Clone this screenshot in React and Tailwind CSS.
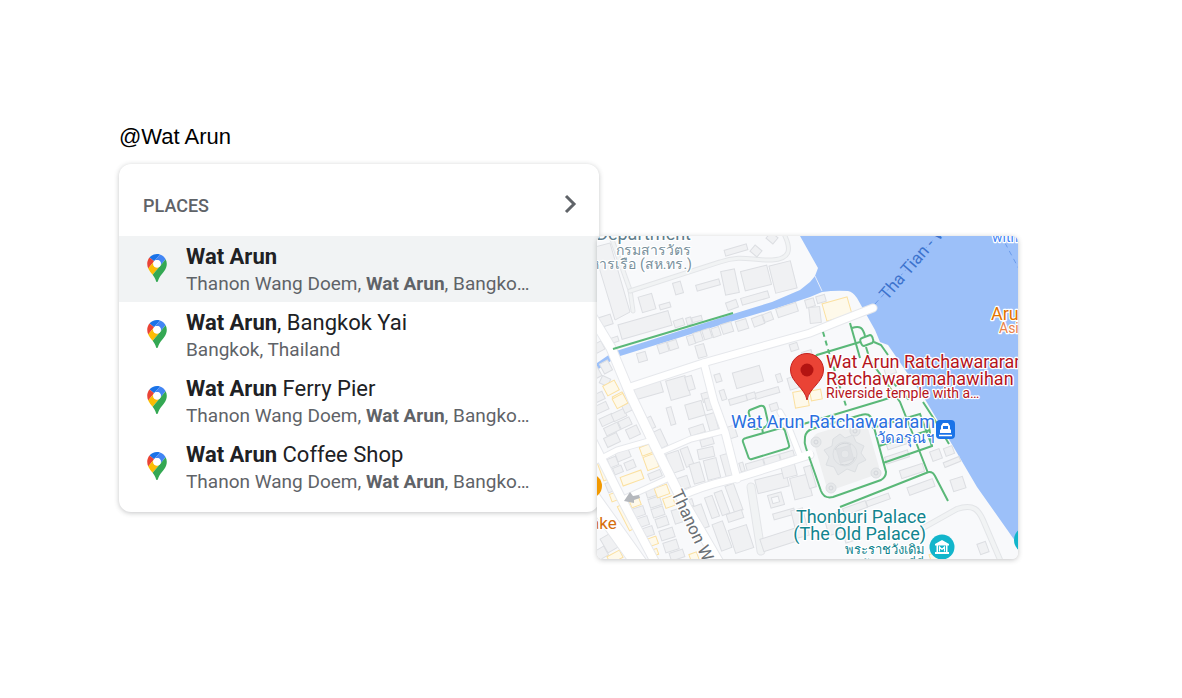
import React, { useState } from 'react';

const places = [
  { id: 'wat-arun', match: 'Wat Arun', rest: '', address: ['Thanon Wang Doem, ', 'Wat Arun', ', Bangko…'] },
  { id: 'bangkok-yai', match: 'Wat Arun', rest: ', Bangkok Yai', address: ['Bangkok, Thailand'] },
  { id: 'ferry-pier', match: 'Wat Arun', rest: ' Ferry Pier', address: ['Thanon Wang Doem, ', 'Wat Arun', ', Bangko…'] },
  { id: 'coffee-shop', match: 'Wat Arun', rest: ' Coffee Shop', address: ['Thanon Wang Doem, ', 'Wat Arun', ', Bangko…'] },
];

// Buildings: [center x, center y, width, height, angle]
const buildings = [
  [50, 67, 14, 16, -16], [68, 70, 11, 5, -16], [48, 89, 52, 15, -16], [81, 52, 8, 12, -16],
  [111, 49, 24, 6, -16], [139, 14, 23, 6, -16], [159, 15, 9, 8, 40], [175, 2, 9, 8, 40], [133, 46, 14, 24, -12],
  [159, 42, 27, 20, -14], [186, 41, 22, 28, -14], [158, 62, 28, 7, -16], [135, 69, 11, 8, -20],
  [8, 85, 14, 10, -18], [17, 104, 9, 5, -18], [82, 87, 10, 7, -18], [92, 85, 5, 7, -16],
  [100, 83, 10, 5, -14], [66, 112, 10, 9, -18], [76, 109, 9, 9, -18], [45, 121, 9, 9, -16],
  [94, 104, 7, 9, -18], [101, 101, 8, 10, -18], [110, 98, 8, 10, -18], [119, 96, 8, 9, -18],
  [130, 92, 11, 10, -18], [145, 89, 11, 10, -18], [161, 85, 11, 9, -20], [171, 81, 9, 8, -20],
  [190, 74, 21, 9, -18], [104, 115, 9, 13, -16], [197, 111, 8, 7, -18], [151, 141, 28, 16, -16],
  [121, 142, 6, 8, -18], [182, 142, 5, 8, -18], [170, 157, 25, 6, -16], [126, 159, 5, 10, -18],
  [196, 147, 9, 12, -16], [51, 153, 28, 14, -16], [81, 152, 20, 20, -16], [93, 147, 7, 14, -16],
  [109, 161, 8, 9, -16], [2, 111, 9, 9, -28], [9, 131, 9, 11, -28], [-1, 137, 8, 10, -28],
  [8, 145, 9, 8, 25], [2, 161, 10, 8, -25], [4, 172, 14, 8, -25], [10, 184, 14, 8, -25], [22, 179, 14, 8, -25],
  [30, 172, 8, 8, -25], [15, 193, 15, 8, -25], [15, 204, 14, 10, -25], [28, 187, 12, 8, -25],
  [36, 196, 12, 10, -25], [53, 187, 7, 12, -25], [63, 203, 9, 18, -25], [74, 180, 5, 18, -16],
  [98, 174, 17, 15, -16], [112, 168, 7, 12, -16], [100, 194, 15, 8, -18], [115, 186, 9, 17, -16],
  [135, 196, 8, 12, -18], [141, 164, 18, 6, -16], [154, 160, 9, 6, -16], [177, 171, 8, 7, -18],
  [16, 226, 9, 9, -22], [26, 219, 14, 9, -22], [21, 234, 9, 7, -22], [33, 229, 10, 8, -22],
  [13, 251, 7, 10, -22], [58, 239, 13, 7, -22], [78, 226, 13, 20, -18], [90, 221, 8, 19, -20],
  [100, 237, 11, 20, -16], [110, 206, 13, 7, -16], [109, 217, 16, 10, -12], [115, 233, 13, 20, -14],
  [130, 229, 8, 22, -16], [86, 247, 12, 12, -18], [41, 276, 13, 9, -18], [45, 286, 13, 9, -18],
  [50, 296, 13, 9, -18], [55, 256, 12, 9, -18], [58, 266, 12, 9, -18], [61, 276, 12, 9, -18],
  [65, 286, 12, 9, -18], [70, 298, 14, 10, -18], [74, 310, 14, 10, -18], [80, 319, 14, 8, -18],
  [81, 280, 10, 14, -18], [93, 267, 6, 7, -18], [103, 281, 11, 24, -20], [115, 271, 8, 22, -20],
  [125, 267, 8, 24, -20], [137, 262, 9, 28, -20], [138, 280, 16, 8, -18], [125, 300, 11, 28, -20],
  [144, 303, 19, 24, -18], [145, 231, 4, 9, -16], [158, 229, 18, 7, -16], [175, 224, 16, 7, -16],
  [190, 219, 14, 6, -16], [175, 247, 32, 14, -14], [192, 235, 14, 12, -14], [204, 251, 18, 22, -14],
  [179, 264, 14, 13, -16], [187, 278, 22, 6, -16], [182, 304, 36, 13, -18], [203, 287, 12, 28, -14],
  [315, 235, 24, 8, -18], [324, 251, 27, 8, -20], [281, 264, 24, 6, -20], [258, 272, 24, 7, -20],
  [300, 221, 24, 7, -18], [299, 206, 20, 10, -18], [339, 219, 10, 10, -20], [352, 215, 9, 8, -20],
  [355, 226, 17, 5, -22], [361, 248, 13, 12, -18], [386, 312, 9, 11, -20], [213, 241, 7, 22, -16],
  [236, 288, 14, 20, -16], [213, 67, 9, 8, -16], [224, 63, 9, 7, -16], [218, 79, 11, 16, -6],
  [210, 118, 10, 6, -16], [293, 134, 11, 9, -18], [255, 300, 16, 10, -18], [14, 306, 16, 16, -30], [3, 318, 14, 10, -30],
];

const shops = [
  [240, 73, 26, 18, -16], [14, 152, 13, 11, -28], [22, 162, 11, 8, -28], [23, 165, 12, 11, -28],
  [49, 214, 11, 9, -20], [54, 226, 12, 14, -20], [35, 242, 22, 9, -20], [6, 234, 6, 21, -20],
  [17, 261, 7, 8, -20], [65, 255, 13, 10, -20], [72, 266, 10, 10, -20], [38, 266, 10, 9, -20],
  [30, 281, 8, 27, -27], [54, 306, 13, 8, -20], [56, 317, 10, 6, -20], [18, 321, 14, 8, -28],
  [97, 321, 8, 8, -20], [-1, 214, 6, 10, -20], [219, 159, 11, 10, -10], [204, 163, 14, 16, -10], [338, 321, 10, 8, -18],
];

const roads = [
  ['M-4 82 L14 112 L34 160 L58 210 L82 258 L124 330', 9],
  ['M30 152 L106 127 L213 97 L240 86 L276 72', 7],
  ['M107 127 L117 166 L128 196 L140 243', 7],
  ['M84 260 C110 248 125 246 140 242 L213 219', 7],
  ['M-3 226 L20 214 L55 204', 5],
  ['M64 216 L94 203 L126 195', 5],
  ['M-4 206 L24 262 L58 326', 8],
  ['M-6 260 L44 330', 15],
  ['M26 263 L70 243', 5],
  ['M183 176 L192 192 L203 220', 5],
];

const sideRoads = [
  ['M13 -2 L33 54 L36 75', 4],
  ['M33 55 L123 26 C145 18 155 25 175 24 C193 23 195 14 187 -2', 4],
  ['M326 292 L360 273 C377 267 382 275 386 284 L404 326', 5],
  ['M154 251 L164 315', 8],
];

const paths = [
  'M16 113 L136 77',
  'M253 87 L263 122',
  'M255 92 C263 89 266 92 268 100',
  'M265 102 L273 99 Q275 99 276 103 Q277 106 275 107 L267 110 Q265 110 264 107 Q262 103 265 102 Z',
  'M277 106 L284 109 L291 119',
  'M263 106 L220 119 L214 125',
  'M269 111 L273 124 L303 166 L315 196 L331 237',
  'M203 189 L286 164 L298 160',
  'M243 271 L329 237 Q335 234 338 240 L351 265',
  'M286 227 L335 210 L331 185',
  'M275 192 L323 178 L335 210',
  'M282 210 L333 194',
  'M326 166 L339 186 L352 208',
  'M208 201 Q209 195 215 193 L264 179 Q273 176 275 184 L289 236 Q289 241 284 244 L236 261 Q227 263 224 255 L209 212 Q207 207 208 201 Z',
  'M146 206 Q145 203 149 202 L184 192 Q187 192 188 195 L192 209 Q193 212 188 213 L155 223 Q152 224 151 220 Z',
  'M153 174 L163 170 Q167 169 168 173 L171 186 Q171 190 166 192 L158 193 Q156 193 155 188 L152 178 Q151 175 153 174 Z',
  'M165 192 L166 197',
];

const PlaceIcon = () => (
  <svg viewBox="0 0 92.3 132.3" className="h-7 w-5 shrink-0" aria-hidden="true">
    <path fill="#1a73e8" d="M60.2 2.2C55.8.8 51 0 46.1 0 32 0 19.3 6.4 10.8 16.5l21.8 18.3L60.2 2.2z" />
    <path fill="#ea4335" d="M10.8 16.5C4.1 24.5 0 34.9 0 46.1c0 8.7 1.7 15.7 4.6 22l28-33.3-21.8-18.3z" />
    <path fill="#4285f4" d="M46.2 28.5c9.8 0 17.7 7.9 17.7 17.7 0 4.3-1.6 8.3-4.2 11.4 0 0 13.9-16.6 27.5-32.7-5.6-10.8-15.3-19-27-22.7L32.6 34.8c3.3-3.8 8.1-6.3 13.6-6.3" />
    <path fill="#fbbc04" d="M46.2 63.8c-9.8 0-17.7-7.9-17.7-17.7 0-4.3 1.5-8.3 4.1-11.3l-28 33.3c4.8 10.6 12.8 19.2 21 29.9l34.1-40.5c-3.3 3.9-8.1 6.3-13.5 6.3" />
    <path fill="#34a853" d="M59.1 109.2c15.4-24.1 33.3-35 33.3-63 0-7.7-1.9-14.9-5.2-21.3L25.6 98c2.6 3.4 5.3 7.3 7.9 11.3 9.4 14.5 6.8 23.1 12.8 23.1s3.4-8.7 12.8-23.2" />
    <circle cx="46.2" cy="46.2" r="18" fill="#fff" />
  </svg>
);

const Block = ({ shape, fill, stroke }) => {
  const [x, y, w, h, angle] = shape;
  return (
    <rect
      x={x - w / 2}
      y={y - h / 2}
      width={w}
      height={h}
      transform={`rotate(${angle} ${x} ${y})`}
      fill={fill}
      stroke={stroke}
    />
  );
};

// Map text with a white halo
const Label = ({ x, y, size, color, anchor = 'start', rotate = 0, halo = '#fff', children }) => (
  <text
    x={x}
    y={y}
    fontSize={size}
    fill={color}
    stroke={halo}
    strokeWidth="2.5"
    strokeLinejoin="round"
    paintOrder="stroke"
    textAnchor={anchor}
    transform={`rotate(${rotate} ${x} ${y})`}
  >
    {children}
  </text>
);

const Temple = () => (
  <g>
    <path d="M216 204 Q216 199 221 197 L262 185 Q269 184 270 189 L282 231 Q283 237 278 239 L238 253 Q231 255 229 249 Z" fill="#eeeff0" />
    <g fill="#e6e8ea" stroke="#dcdfe2">
      <path d="M243 198 L248 202 L256 199 L259 206 L267 210 L264 217 L269 224 L261 228 L258 236 L250 233 L241 239 L237 231 L229 229 L232 221 L227 214 L235 210 L236 203 Z" />
      <circle cx="248" cy="218" r="12" />
      <rect x="241" y="211" width="14" height="14" transform="rotate(-16 248 218)" fill="#dfe1e4" />
      <circle cx="248" cy="218" r="4" />
      <circle cx="219" cy="206" r="5" />
      <circle cx="258" cy="195" r="5" />
      <circle cx="279" cy="237" r="5" />
      <circle cx="234" cy="252" r="5" />
    </g>
    <g fill="none" stroke="#d3d6da">
      <circle cx="219" cy="206" r="2" />
      <circle cx="258" cy="195" r="2" />
      <circle cx="279" cy="237" r="2" />
      <circle cx="234" cy="252" r="2" />
      <path d="M238 214 A11 11 0 0 1 254 209" />
      <path d="M258 221 A11 11 0 0 1 243 228" />
    </g>
  </g>
);

const MapPreview = () => (
  <svg
    viewBox="0 0 421 323"
    className="block h-auto w-full font-[Roboto,'Noto_Sans',sans-serif]"
    role="img"
    aria-label="Map of Wat Arun"
  >
    <rect width="421" height="323" fill="#f8f9fb" />

    {/* River and canal */}
    <path
      fill="#9cc0f9"
      d="M203 0 L221 32 L218 40 L213 46 L203 54 L175 66 L136 78 L16 116 L0 127 V134 L20 121 L136 85 L180 72 L213 61 L225 56 Q238 54 251 55 Q256 56 260 62 L278 94 L283 106 L291 109 L313 141 L326 160 L353 205 L380 251 L416 302 L421 309 V0 Z"
    />
    <path d="M218 40 L225 55" stroke="#e8eefa" fill="none" />

    {sideRoads.map(([d, w]) => (
      <g key={d} fill="none" strokeLinecap="round">
        <path d={d} stroke="#e3e5e8" strokeWidth={w + 1} />
        <path d={d} stroke="#f1f3f4" strokeWidth={w - 1} />
      </g>
    ))}

    <path d="M-2 11 L13 7 L33 76 L18 84 L-2 18 Z" fill="#f1f2f4" stroke="#dddfe3" />
    {buildings.map((shape, i) => (
      <Block key={i} shape={shape} fill="#f0f1f3" stroke="#dcdee2" />
    ))}
    {shops.map((shape, i) => (
      <Block key={i} shape={shape} fill="#fef9ea" stroke="#fbe0a0" />
    ))}
    <rect x="175" y="261" width="7" height="6" transform="rotate(-16 178 264)" fill="#f8f9fb" stroke="#dcdee2" />

    {roads.map(([d, w]) => (
      <path key={d} d={d} fill="none" stroke="#e6e8ec" strokeWidth={w + 2} strokeLinecap="round" />
    ))}
    {roads.map(([d, w]) => (
      <path key={d} d={d} fill="none" stroke="#fff" strokeWidth={w} strokeLinecap="round" />
    ))}

    <Temple />

    <g fill="none" stroke="#5ab878" strokeWidth="2">
      {paths.map((d) => (
        <path key={d} d={d} />
      ))}
      <path d="M226 96 L233 120 L250 173" strokeDasharray="5 4" />
      <path d="M290 140 L313 165" strokeDasharray="5 4" />
    </g>
    <path d="M205 220 L213 217" stroke="#fff" strokeWidth="6" strokeLinecap="round" />

    <path d="M278 68 L345 -6" stroke="#6b9bea" strokeDasharray="5 4" />
    <path d="M408 7 L422 33" stroke="#6b9bea" strokeDasharray="5 4" />
    <path d="M27 265 L33 256 L36 260 L42 259 L43 262 L37 264 L37 267 Z" fill="#b5b8bd" />

    {/* Markers at the map edges */}
    <circle cx="-7" cy="250" r="12" fill="#f29900" />
    <circle cx="430" cy="304" r="13" fill="#12b5cb" />

    <Label x={94} y={4} size={18} color="#607d8b" anchor="end">Department</Label>
    <Label x={94} y={19} size={14} color="#78909c" anchor="end">กรมสารวัตร</Label>
    <Label x={95} y={33} size={14} color="#78909c" anchor="end">หารเรือ (สห.ทร.)</Label>
    <Label x={290} y={65} size={17} color="#3d73cd" rotate={-49} halo="#9cc0f9">Tha Tian - Wat</Label>
    <Label x={395} y={6} size={14} color="#4285f4">with</Label>
    <Label x={394} y={84} size={18} color="#e37400">Aru</Label>
    <Label x={402} y={97} size={14} color="#e8824a">Asi</Label>
    <Label x={-7} y={293} size={17} color="#d56e0c">ake</Label>
    <Label x={74} y={257} size={17} color="#6b7075" rotate={65}>Thanon Wa</Label>
    <Label x={338} y={192} size={18} color="#2a6fe0" anchor="end">Wat Arun Ratchawararam</Label>
    <Label x={337} y={207} size={15} color="#2a6fe0" anchor="end">วัดอรุณฯ</Label>
    <Label x={329} y={287} size={18} color="#12858f" anchor="end">Thonburi Palace</Label>
    <Label x={329} y={304} size={18} color="#12858f" anchor="end">(The Old Palace)</Label>
    <Label x={328} y={318} size={13} color="#12858f" anchor="end">พระราชวังเดิม</Label>
    <Label x={328} y={333} size={13} color="#12858f" anchor="end">วัดอรุณ ที่นี่</Label>

    {/* Ferry stop */}
    <rect x="339" y="184" width="19" height="19" rx="4" fill="#1a73e8" />
    <path d="M346 187 H351 L353 190 V193 L354 194 V197 H343 V194 L344 193 V190 Z M346 190 V193 H351 V190 Z" fill="#fff" fillRule="evenodd" />
    <path d="M342 199.5 H355" stroke="#fff" strokeWidth="1.5" />

    {/* Museum */}
    <circle cx="345" cy="311" r="12.5" fill="#12b5cb" />
    <path d="M345 304 L352 308 V309.500 H338 V308 Z M338 316 H352 V318 H338 Z M339.500 309 H341 V316 H339.500 Z M349 309 H350.500 V316 H349 Z" fill="#fff" />
    <path d="M342.500 315.500 V311 L345 313.500 L347.500 311 V315.500" fill="none" stroke="#fff" strokeWidth="1.200" />

    <Label x={229} y={132} size={18} color="#b5141c">Wat Arun Ratchawararam</Label>
    <Label x={229} y={149} size={18} color="#b5141c">Ratchawaramahawihan</Label>
    <Label x={229} y={162} size={14} color="#b5141c">Riverside temple with a…</Label>

    {/* Selected place */}
    <path d="M210 164 C208 152 193.500 146 193.500 134 A16.500 16.500 0 0 1 226.500 134 C226.500 146 212 152 210 164 Z" fill="#ea4335" stroke="#c5221f" />
    <circle cx="210" cy="134" r="6.500" fill="#b31412" />
  </svg>
);

const PlaceRow = ({ place, active, onSelect }) => (
  <li>
    <button
      type="button"
      onClick={onSelect}
      className={`flex h-[66px] w-full items-center pr-10 pb-0.5 pl-7 text-left ${active ? 'bg-[#f1f3f4]' : 'bg-white'}`}
    >
      <PlaceIcon />
      <span className="ml-[19px] block min-w-0 pt-1">
        <span className="block truncate text-[22px] leading-7 text-[#202124]">
          <b className="font-bold">{place.match}</b>
          {place.rest}
        </span>
        <span className="block truncate text-[19px] leading-[26px] text-[#5f6368]">
          {place.address.map((part, i) => (i === 1 ? <b key={i} className="font-bold">{part}</b> : part))}
        </span>
      </span>
    </button>
  </li>
);

const App = () => {
  const [selected, setSelected] = useState('wat-arun');

  return (
    <main className="min-h-screen bg-white pt-[121px] pr-8 pl-[119px] font-[Roboto,sans-serif]">
      <p className="mb-[11px] font-['Liberation_Sans',Arial,sans-serif] text-[22px] leading-8 text-black">@Wat Arun</p>

      <div className="flex items-start">
        <section className="w-[480px] rounded-xl bg-white pb-3 shadow-[0_1px_5px_rgba(60,64,67,0.3)]">
          <header className="flex h-[72px] items-center justify-between pt-2 pr-[17px] pl-6">
            <h2 className="pt-1 text-[18px] leading-6 font-medium text-[#5f6368]">PLACES</h2>
            <button type="button" aria-label="More places">
              <svg viewBox="0 0 24 24" className="size-6" fill="none" stroke="#5f6368" strokeWidth="3">
                <path d="M8 4 L16 12 L8 20" />
              </svg>
            </button>
          </header>
          <ul>
            {places.map((place) => (
              <PlaceRow
                key={place.id}
                place={place}
                active={place.id === selected}
                onSelect={() => setSelected(place.id)}
              />
            ))}
          </ul>
        </section>

        <figure className="mt-[72px] -ml-0.5 w-[421px] overflow-hidden rounded-md shadow-[0_1px_5px_rgba(60,64,67,0.3)]">
          <MapPreview />
        </figure>
      </div>
    </main>
  );
};

export default App;
